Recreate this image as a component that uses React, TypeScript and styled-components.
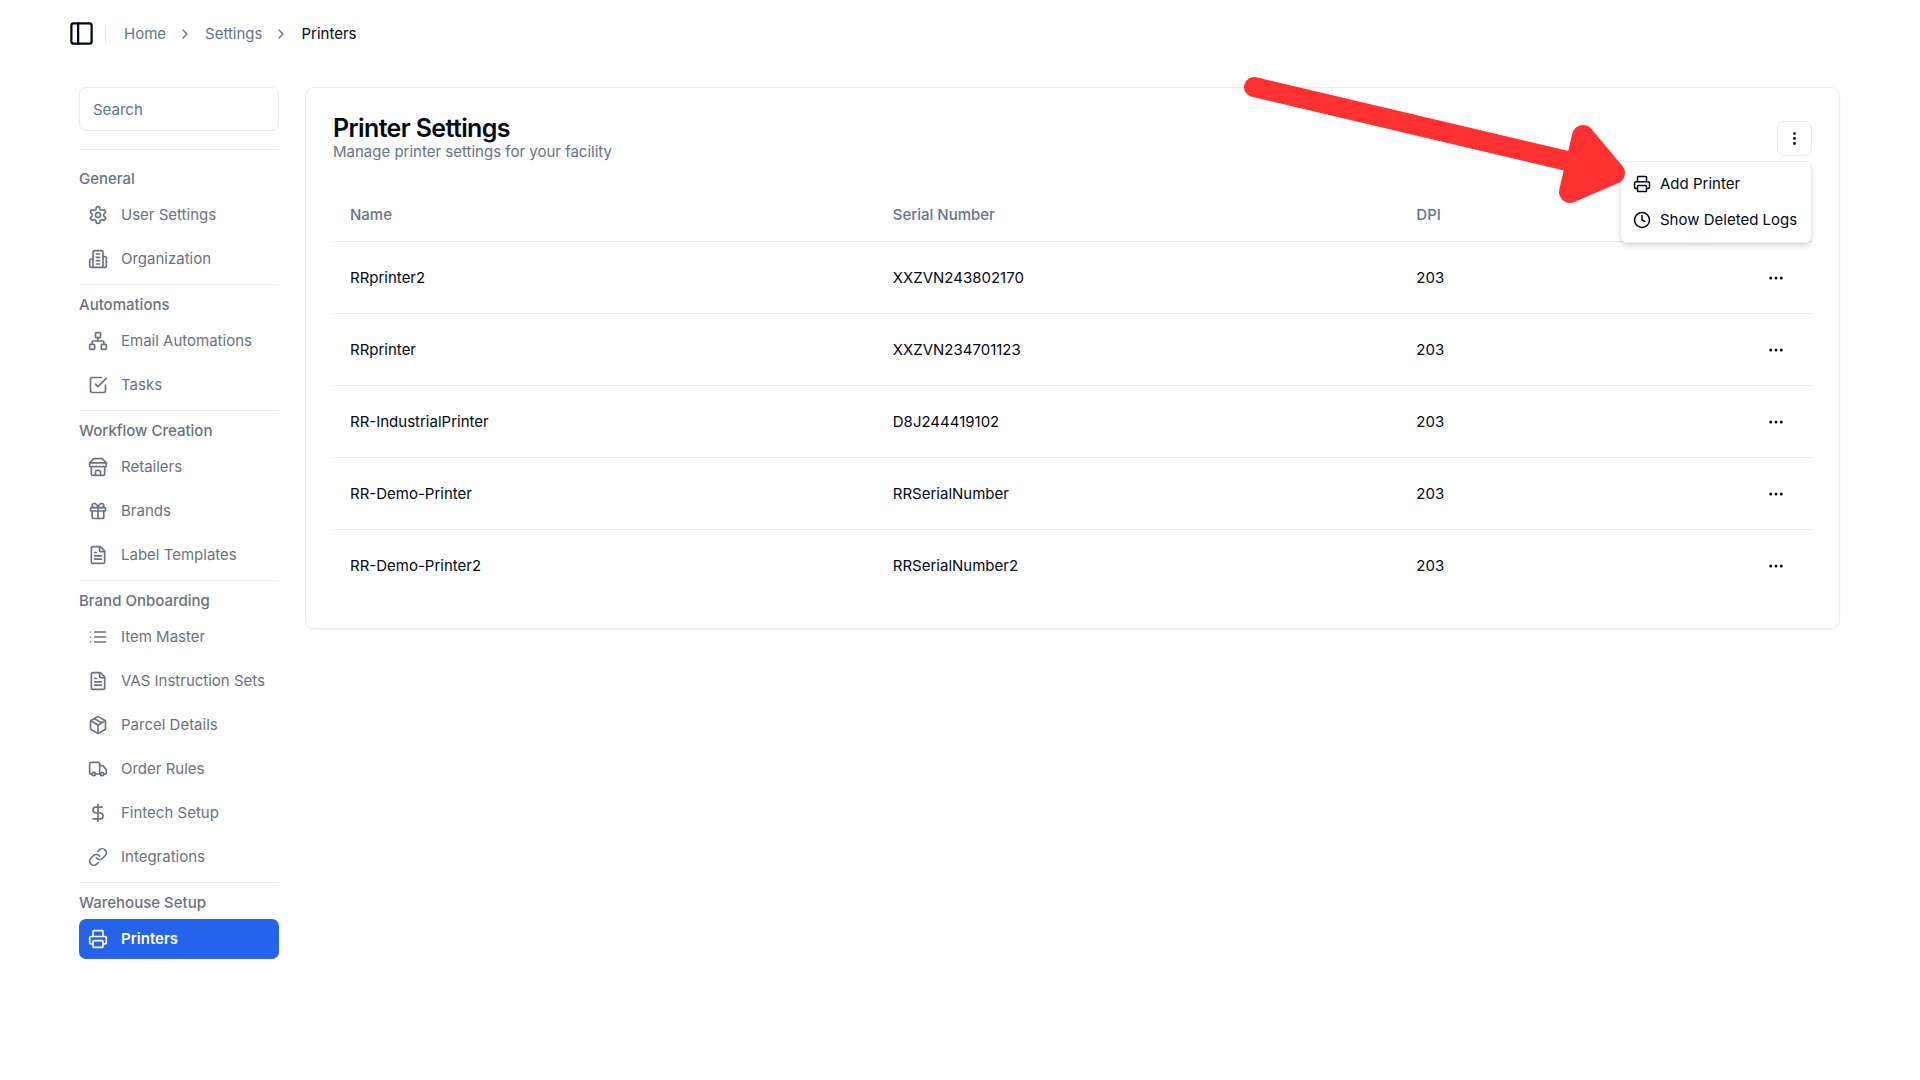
import React from "react";
import styled, { createGlobalStyle } from "styled-components";
import {
  ChevronRight,
  Clock,
  DollarSign,
  Ellipsis,
  EllipsisVertical,
  FileText,
  Gift,
  Link as LinkIcon,
  Network,
  Package,
  PanelLeft,
  Printer,
  Truck,
} from "lucide-react";

const color = {
  ink: "#020817",
  slate: "#64748b",
  gray: "#6b7280",
  line: "#e6ecf4",
  blue: "#2563eb",
  red: "#ff3131",
};

const GlobalStyle = createGlobalStyle`
  *, *::before, *::after { box-sizing: border-box; }
  body {
    margin: 0;
    background: #fff;
    color: ${color.ink};
    font-family: Inter, "Liberation Sans", sans-serif;
    font-size: 15px;
    line-height: 20px;
  }
  button, input { font: inherit; color: inherit; }
  a { color: inherit; text-decoration: none; }
  svg { display: block; flex: none; }
`;

const TopBar = styled.header`
  display: flex;
  align-items: center;
  height: 67px;
  padding: 0 68px;
`;

const PlainButton = styled.button`
  display: grid;
  place-items: center;
  padding: 0;
  border: 0;
  background: none;
  cursor: pointer;
`;

const TopBarRule = styled.span`
  width: 1px;
  height: 18px;
  margin: 0 18px 0 10px;
  background: #dde4ed;
`;

const Crumbs = styled.ol`
  display: flex;
  align-items: center;
  gap: 12px;
  margin: 0;
  padding: 0;
  list-style: none;
  color: ${color.slate};
`;

const Crumb = styled.li`
  display: flex;
  align-items: center;
  gap: 11px;

  [aria-current] {
    color: ${color.ink};
  }
`;

const Body = styled.div`
  display: flex;
  align-items: flex-start;
  gap: 26px;
  padding: 20px 80px 80px 79px;
`;

const Sidebar = styled.aside`
  flex: none;
  width: 200px;
`;

const SearchInput = styled.input`
  display: block;
  width: 100%;
  height: 44px;
  padding: 0 13px;
  border: 1px solid ${color.line};
  border-radius: 7px;
  background: #fff;

  &::placeholder {
    color: ${color.slate};
    opacity: 1;
  }
`;

const Divider = styled.hr`
  height: 1px;
  margin: 18px 0 9px;
  border: 0;
  background: ${color.line};
`;

const Group = styled.section`
  display: flex;
  flex-direction: column;
  gap: 6px;
  padding: 10px 0 5px;

  & + & {
    border-top: 1px solid ${color.line};
  }
`;

const GroupTitle = styled.h2`
  margin: 0;
  color: ${color.gray};
  font-size: 15px;
  font-weight: 500;
  line-height: 20px;
`;

const GroupList = styled.ul`
  display: flex;
  flex-direction: column;
  gap: 4px;
  margin: 0;
  padding: 0;
  list-style: none;
`;

const NavLink = styled.a<{ $active?: boolean }>`
  display: flex;
  align-items: center;
  gap: 13px;
  height: 40px;
  padding: 0 9px;
  border-radius: 7px;
  color: ${(p) => (p.$active ? "#fff" : color.gray)};
  background: ${(p) => (p.$active ? color.blue : "transparent")};
  font-weight: ${(p) => (p.$active ? 600 : 400)};
  white-space: nowrap;
`;

const Card = styled.main`
  flex: 1;
  min-width: 0;
  padding: 25px 27px 26px;
  border: 1px solid ${color.line};
  border-radius: 9px;
  box-shadow: 0 1px 2px rgba(15, 23, 42, 0.06);
`;

const CardHeader = styled.div`
  display: flex;
  align-items: center;
  justify-content: space-between;
  height: 50px;
`;

const Title = styled.h1`
  margin: 0;
  font-size: 25px;
  font-weight: 600;
  line-height: 28px;
  letter-spacing: -0.025em;
`;

const Subtitle = styled.p`
  margin: 0;
  color: ${color.slate};
`;

const MenuAnchor = styled.div`
  position: relative;
`;

const MenuButton = styled(PlainButton)`
  width: 35px;
  height: 35px;
  border: 1px solid ${color.line};
  border-radius: 7px;
`;

const Menu = styled.div`
  position: absolute;
  top: 40px;
  right: 0;
  z-index: 1;
  width: 192px;
  padding: 4px;
  border: 1px solid ${color.line};
  border-radius: 7px;
  background: #fff;
  box-shadow: 0 4px 7px -1px rgba(0, 0, 0, 0.12), 0 2px 4px -2px rgba(0, 0, 0, 0.12);
`;

const MenuItem = styled.button`
  display: flex;
  align-items: center;
  gap: 9px;
  width: 100%;
  height: 36px;
  padding: 0 8px;
  border: 0;
  background: none;
  white-space: nowrap;
  cursor: pointer;
`;

const Arrow = styled.svg`
  position: absolute;
  top: -54px;
  right: 182px;
  z-index: 2;
  pointer-events: none;
`;

const Table = styled.table`
  width: 100%;
  margin-top: 26px;
  border-collapse: separate;
  border-spacing: 0;
  table-layout: fixed;
  text-align: left;
`;

const HeadCell = styled.th<{ $width?: string }>`
  width: ${(p) => p.$width ?? "auto"};
  height: 53px;
  padding: 0 17px;
  border-bottom: 1px solid ${color.line};
  color: ${color.slate};
  font-weight: 500;
`;

const Row = styled.tr`
  & > td {
    height: 72px;
    padding: 0 17px;
    border-bottom: 1px solid ${color.line};
  }
  &:last-child > td {
    border-bottom: 0;
  }
`;

const RowButton = styled(PlainButton)`
  width: 38px;
  height: 38px;
  margin-left: auto;
`;

type IconProps = { size?: number };

const stroke = (size: number) => ({
  width: size,
  height: size,
  viewBox: "0 0 24 24",
  fill: "none",
  stroke: "currentColor",
  strokeWidth: 2,
  strokeLinecap: "round" as const,
  strokeLinejoin: "round" as const,
});

const CogIcon = ({ size = 20 }: IconProps) => (
  <svg {...stroke(size)}>
    <path d="M12.22 2h-.44a2 2 0 0 0-2 2v.18a2 2 0 0 1-1 1.73l-.43.25a2 2 0 0 1-2 0l-.15-.08a2 2 0 0 0-2.73.73l-.22.38a2 2 0 0 0 .73 2.73l.15.1a2 2 0 0 1 1 1.72v.51a2 2 0 0 1-1 1.74l-.15.09a2 2 0 0 0-.73 2.73l.22.38a2 2 0 0 0 2.73.73l.15-.08a2 2 0 0 1 2 0l.43.25a2 2 0 0 1 1 1.73V20a2 2 0 0 0 2 2h.44a2 2 0 0 0 2-2v-.18a2 2 0 0 1 1-1.73l.43-.25a2 2 0 0 1 2 0l.15.08a2 2 0 0 0 2.73-.73l.22-.39a2 2 0 0 0-.73-2.73l-.15-.08a2 2 0 0 1-1-1.74v-.5a2 2 0 0 1 1-1.74l.15-.09a2 2 0 0 0 .73-2.73l-.22-.38a2 2 0 0 0-2.73-.73l-.15.08a2 2 0 0 1-2 0l-.43-.25a2 2 0 0 1-1-1.73V4a2 2 0 0 0-2-2z" />
    <circle cx="12" cy="12" r="3" />
  </svg>
);

const BuildingIcon = ({ size = 20 }: IconProps) => (
  <svg {...stroke(size)}>
    <path d="M6 22V4a2 2 0 0 1 2-2h8a2 2 0 0 1 2 2v18Z" />
    <path d="M6 12H4a2 2 0 0 0-2 2v6a2 2 0 0 0 2 2h2" />
    <path d="M18 9h2a2 2 0 0 1 2 2v9a2 2 0 0 1-2 2h-2" />
    <path d="M10 6h4M10 10h4M10 14h4M10 18h4" />
  </svg>
);

const TaskIcon = ({ size = 20 }: IconProps) => (
  <svg {...stroke(size)}>
    <path d="m9 11 3 3L22 4" />
    <path d="M21 12v7a2 2 0 0 1-2 2H5a2 2 0 0 1-2-2V5a2 2 0 0 1 2-2h11" />
  </svg>
);

const StoreIcon = ({ size = 20 }: IconProps) => (
  <svg {...stroke(size)}>
    <path d="m2 7 4.41-4.41A2 2 0 0 1 7.83 2h8.34a2 2 0 0 1 1.42.59L22 7" />
    <path d="M4 12v8a2 2 0 0 0 2 2h12a2 2 0 0 0 2-2v-8" />
    <path d="M15 22v-4a2 2 0 0 0-2-2h-2a2 2 0 0 0-2 2v4" />
    <path d="M2 7h20" />
    <path d="M22 7v3a2 2 0 0 1-2 2a2.7 2.7 0 0 1-1.59-.63.7.7 0 0 0-.82 0A2.7 2.7 0 0 1 16 12a2.7 2.7 0 0 1-1.59-.63.7.7 0 0 0-.82 0A2.7 2.7 0 0 1 12 12a2.7 2.7 0 0 1-1.59-.63.7.7 0 0 0-.82 0A2.7 2.7 0 0 1 8 12a2.7 2.7 0 0 1-1.59-.63.7.7 0 0 0-.82 0A2.7 2.7 0 0 1 4 12a2 2 0 0 1-2-2V7" />
  </svg>
);

const ListIcon = ({ size = 20 }: IconProps) => (
  <svg {...stroke(size)}>
    <path d="M8 6h13M8 12h13M8 18h13M3 6h.01M3 12h.01M3 18h.01" />
  </svg>
);

type Entry = { label: string; Icon: React.ComponentType<IconProps>; active?: boolean };

const groups: { title: string; items: Entry[] }[] = [
  {
    title: "General",
    items: [
      { label: "User Settings", Icon: CogIcon },
      { label: "Organization", Icon: BuildingIcon },
    ],
  },
  {
    title: "Automations",
    items: [
      { label: "Email Automations", Icon: Network },
      { label: "Tasks", Icon: TaskIcon },
    ],
  },
  {
    title: "Workflow Creation",
    items: [
      { label: "Retailers", Icon: StoreIcon },
      { label: "Brands", Icon: Gift },
      { label: "Label Templates", Icon: FileText },
    ],
  },
  {
    title: "Brand Onboarding",
    items: [
      { label: "Item Master", Icon: ListIcon },
      { label: "VAS Instruction Sets", Icon: FileText },
      { label: "Parcel Details", Icon: Package },
      { label: "Order Rules", Icon: Truck },
      { label: "Fintech Setup", Icon: DollarSign },
      { label: "Integrations", Icon: LinkIcon },
    ],
  },
  {
    title: "Warehouse Setup",
    items: [{ label: "Printers", Icon: Printer, active: true }],
  },
];

const printers = [
  { name: "RRprinter2", serial: "XXZVN243802170", dpi: 203 },
  { name: "RRprinter", serial: "XXZVN234701123", dpi: 203 },
  { name: "RR-IndustrialPrinter", serial: "D8J244419102", dpi: 203 },
  { name: "RR-Demo-Printer", serial: "RRSerialNumber", dpi: 203 },
  { name: "RR-Demo-Printer2", serial: "RRSerialNumber2", dpi: 203 },
];

export default function App() {
  return (
    <>
      <GlobalStyle />
      <TopBar>
        <PlainButton type="button" aria-label="Toggle sidebar">
          <PanelLeft size={27} />
        </PlainButton>
        <TopBarRule />
        <nav aria-label="Breadcrumb">
          <Crumbs>
            <Crumb>
              <a href="#home">Home</a>
              <ChevronRight size={16} />
            </Crumb>
            <Crumb>
              <a href="#settings">Settings</a>
              <ChevronRight size={16} />
            </Crumb>
            <Crumb>
              <span aria-current="page">Printers</span>
            </Crumb>
          </Crumbs>
        </nav>
      </TopBar>

      <Body>
        <Sidebar>
          <SearchInput type="search" placeholder="Search" aria-label="Search" />
          <Divider />
          <nav aria-label="Settings">
            {groups.map((group) => (
              <Group key={group.title}>
                <GroupTitle>{group.title}</GroupTitle>
                <GroupList>
                  {group.items.map(({ label, Icon, active }) => (
                    <li key={label}>
                      <NavLink href="#" $active={active}>
                        <Icon size={20} />
                        {label}
                      </NavLink>
                    </li>
                  ))}
                </GroupList>
              </Group>
            ))}
          </nav>
        </Sidebar>

        <Card>
          <CardHeader>
            <div>
              <Title>Printer Settings</Title>
              <Subtitle>Manage printer settings for your facility</Subtitle>
            </div>
            <MenuAnchor>
              <MenuButton type="button" aria-label="Printer actions">
                <EllipsisVertical size={17} />
              </MenuButton>
              <Menu>
                <MenuItem type="button">
                  <Printer size={18} />
                  Add Printer
                </MenuItem>
                <MenuItem type="button">
                  <Clock size={18} />
                  Show Deleted Logs
                </MenuItem>
              </Menu>
              <Arrow width="390" height="144" viewBox="1240 67 390 144" aria-hidden="true">
                <path
                  d="M1254 87 L1580 164"
                  stroke={color.red}
                  strokeWidth="20"
                  strokeLinecap="round"
                />
                <path
                  d="M1583 136 L1614 173 L1570 192 Z"
                  fill={color.red}
                  stroke={color.red}
                  strokeWidth="22"
                  strokeLinejoin="round"
                />
              </Arrow>
            </MenuAnchor>
          </CardHeader>

          <Table>
            <thead>
              <tr>
                <HeadCell $width="36.7%">Name</HeadCell>
                <HeadCell $width="35.4%">Serial Number</HeadCell>
                <HeadCell>DPI</HeadCell>
                <HeadCell aria-label="Actions" />
              </tr>
            </thead>
            <tbody>
              {printers.map((printer) => (
                <Row key={printer.name}>
                  <td>{printer.name}</td>
                  <td>{printer.serial}</td>
                  <td>{printer.dpi}</td>
                  <td>
                    <RowButton type="button" aria-label={`Actions for ${printer.name}`}>
                      <Ellipsis size={18} />
                    </RowButton>
                  </td>
                </Row>
              ))}
            </tbody>
          </Table>
        </Card>
      </Body>
    </>
  );
}
